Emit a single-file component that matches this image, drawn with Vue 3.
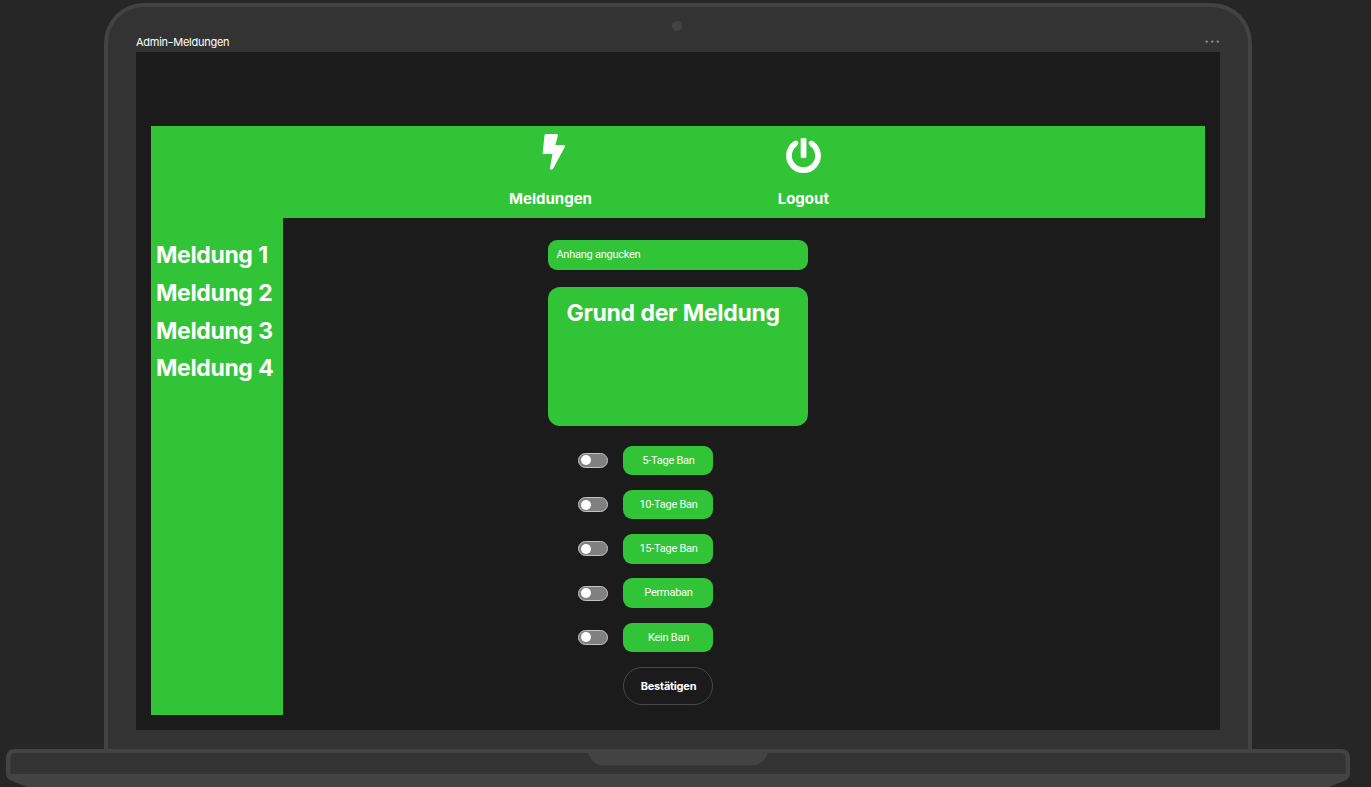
<script setup>
import { ref } from 'vue'

const reports = ['Meldung 1', 'Meldung 2', 'Meldung 3', 'Meldung 4']
const options = ref([
  { label: '5-Tage Ban', on: false },
  { label: '10-Tage Ban', on: false },
  { label: '15-Tage Ban', on: false },
  { label: 'Permaban', on: false },
  { label: 'Kein Ban', on: false },
])
</script>

<template>
  <div class="stage">
    <div class="lid">
      <div class="camera"></div>
      <div class="titlebar">
        <span class="title">Admin<span class="dash">-</span>Meldungen</span>
        <svg class="dots" width="16" height="4" viewBox="0 0 16 4" fill="#8a8a8a">
          <circle cx="2.7" cy="1.6" r="1.2" />
          <circle cx="8.3" cy="1.6" r="1.2" />
          <circle cx="13.8" cy="1.6" r="1.2" />
        </svg>
      </div>
      <main class="screen">
        <nav class="nav">
          <a class="nav-item reports">
            <svg class="bolt" width="24" height="38" viewBox="0 0 24 38">
              <path d="M4 1H14.5Q16.4 1 15.9 2.8L13.3 12H21.5Q23.7 12.1 22.8 14L11.2 35.6Q10.4 36.9 9 36.6Q7.7 36.2 8 34.7L10.5 21H2Q.5 21 .7 19.5L2.5 2.5Q2.7 1 4 1Z" fill="#fff" />
            </svg>
            <span>Meldungen</span>
          </a>
          <a class="nav-item logout">
            <svg class="power" width="36" height="38" viewBox="0 0 36 38">
              <path d="M9.5 10.6A14.5 14.5 0 1 0 25.5 10.6" fill="none" stroke="#fff" stroke-width="5.8" />
              <path d="M9.1 10.8L9.9 10.1M25.9 10.8L25.1 10.1" stroke="#fff" stroke-width="5" stroke-linecap="round" />
              <rect x="14.7" y="5" width="5.7" height="20" rx="1.3" fill="#fff" />
            </svg>
            <span>Logout</span>
          </a>
        </nav>
        <div class="body">
          <aside class="sidebar">
            <div v-for="r in reports" :key="r" class="report">{{ r }}</div>
          </aside>
          <section class="content">
            <div class="attachment">Anhang angucken</div>
            <div class="reason">Grund der Meldung</div>
            <div class="options">
              <div v-for="o in options" :key="o.label" class="option">
                <button class="toggle" :class="{ on: o.on }" @click="o.on = !o.on"><i></i></button>
                <span class="pill">{{ o.label }}</span>
              </div>
            </div>
            <button class="confirm">Bestätigen</button>
          </section>
        </div>
      </main>
    </div>
    <svg class="base" width="1344" height="38" viewBox="0 0 1344 38">
      <path d="M9 0H1335Q1344 0 1344 9V24Q1344 30 1338 32L1323 38H21L6 32Q0 30 0 24V9Q0 0 9 0Z" fill="#434343" />
      <path d="M10 4H1334Q1339.5 4 1339.5 9V25H4.5V9Q4.5 4 10 4Z" fill="#333" />
      <path d="M582 3.5H762Q758 16.5 744 16.5H598Q586 16.5 582 3.5Z" fill="#434343" />
    </svg>
  </div>
</template>

<style>
body { margin: 0; background: #262626; overflow: hidden; }
</style>

<style scoped>
.stage {
  box-sizing: border-box;
  width: 1371px;
  height: 787px;
  padding-top: 3px;
  overflow: hidden;
  background: #262626;
  color: #fff;
  font-family: Inter, "Liberation Sans", sans-serif;
}
.lid {
  box-sizing: border-box;
  width: 1148px;
  height: 746px;
  margin-left: 104px;
  padding: 14px 28px 0;
  border: 4px solid #434343;
  border-bottom: 0;
  border-radius: 40px 40px 0 0;
  background: #333;
}
.camera {
  width: 10px;
  height: 10px;
  margin: 0 0 0 536px;
  border-radius: 50%;
  background: #434343;
}
.titlebar {
  display: flex;
  align-items: center;
  justify-content: space-between;
  height: 21px;
}
.title { font-size: 11px; line-height: 20px; letter-spacing: -0.26px; }
.dash { display: inline-block; transform: scaleX(1.3); letter-spacing: 0.3px; }
.screen {
  box-sizing: border-box;
  width: 1084px;
  height: 678px;
  padding: 74px 15px 15px;
  background: #1b1b1b;
}
.nav {
  display: flex;
  box-sizing: border-box;
  height: 92px;
  padding-top: 7px;
  background: #31c437;
}
.nav-item {
  display: flex;
  flex-direction: column;
  align-items: center;
  gap: 18px;
  font-size: 15px;
  font-weight: 700;
  line-height: 20px;
}
.reports { width: 100px; margin-left: 349.5px; }
.logout { width: 100px; margin-left: 152.8px; }
.bolt { margin-left: 7px; }
.power { overflow: visible; margin-left: 2px; }
.body { display: flex; height: 497px; }
.sidebar {
  box-sizing: border-box;
  width: 132px;
  padding: 18px 0 0 5px;
  background: #31c437;
}
.report {
  height: 37.75px;
  font-size: 23px;
  font-weight: 700;
  line-height: 38px;
  letter-spacing: -0.36px;
  word-spacing: 0.6px;
  white-space: nowrap;
}
.content { width: 260px; margin-left: 265px; padding-top: 22px; }
.attachment {
  box-sizing: border-box;
  height: 30px;
  padding-left: 8.4px;
  border-radius: 9px;
  background: #31c437;
  font: 11px/29px Roboto, sans-serif;
  letter-spacing: -0.25px;
}
.reason {
  box-sizing: border-box;
  height: 139px;
  margin-top: 17px;
  padding: 7px 18.6px;
  border-radius: 12px;
  background: #31c437;
  font-size: 23px;
  font-weight: 700;
  line-height: 38px;
  letter-spacing: -0.32px;
  word-spacing: 0.6px;
  white-space: nowrap;
}
.options { display: flex; flex-direction: column; gap: 14.8px; margin: 19.8px 0 0 30px; }
.option { display: flex; align-items: center; gap: 15px; height: 29.4px; }
.toggle {
  display: flex;
  align-items: center;
  box-sizing: border-box;
  width: 30px;
  height: 15px;
  padding: 0 2px;
  border: 1px solid #c4c4c4;
  border-radius: 8px;
  background: #808080;
}
.toggle.on { justify-content: flex-end; background: #31c437; }
.toggle i { width: 10px; height: 10px; border-radius: 50%; background: #fff; }
.pill {
  box-sizing: border-box;
  width: 90px;
  height: 29.4px;
  padding-left: 1px;
  border-radius: 9px;
  background: #31c437;
  font: 11px/29px Roboto, sans-serif;
  letter-spacing: -0.25px;
  text-align: center;
}
.confirm {
  display: block;
  box-sizing: border-box;
  width: 90px;
  height: 38px;
  margin: 15.2px 0 0 75px;
  padding: 0 0 0 1px;
  border: 1px solid #484848;
  border-radius: 19px;
  background: transparent;
  color: #fff;
  font: 700 11px/36px Inter, sans-serif;
  letter-spacing: -0.22px;
}
.base { display: block; margin-left: 6px; }
</style>
